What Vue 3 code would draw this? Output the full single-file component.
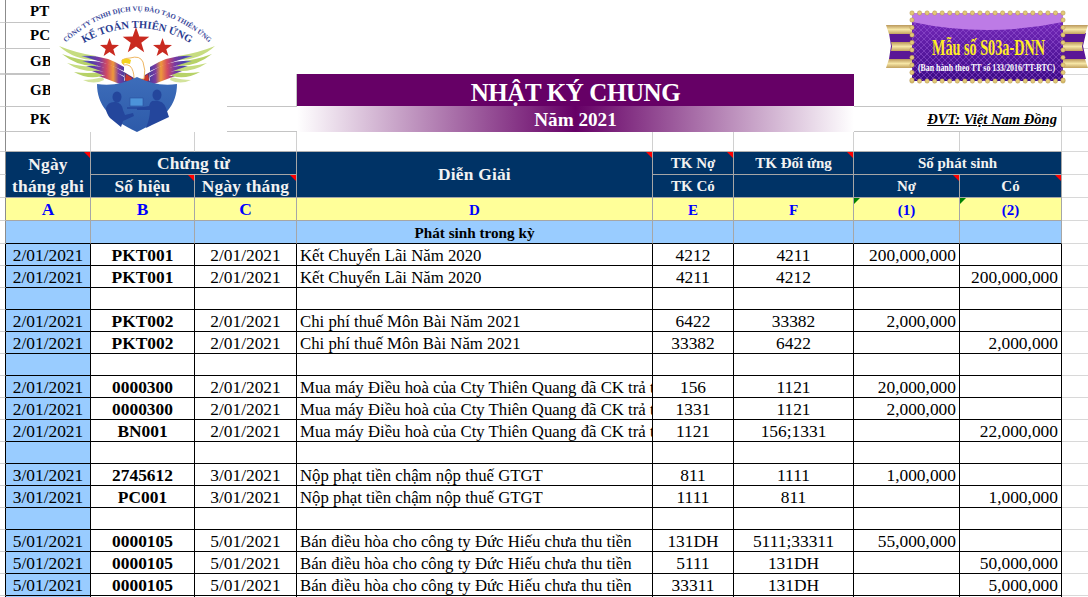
<template>
  <div class="sheet">
    <table class="grid">
      <colgroup>
        <col v-for="(w, i) in colWidths" :key="i" :style="{ width: w + 'px' }" />
      </colgroup>
      <tbody>
        <!-- top rows with the voucher codes -->
        <tr v-for="t in topRows" :key="t.code" :style="{ height: t.h + 'px' }">
          <td class="gutter"></td>
          <td class="code"><div class="code-clip">{{ t.code }}</div></td>
          <td colspan="7"></td>
          <td :class="{ side: t.code === 'PC' }"></td>
        </tr>
        <tr class="r-title">
          <td class="gutter"></td>
          <td class="code"><div class="code-clip">GBC</div></td>
          <td class="title-gap" colspan="2"></td>
          <td class="title-cell" colspan="3">NHẬT KÝ CHUNG</td>
          <td colspan="2"></td>
          <td class="side-t"></td>
        </tr>
        <tr class="r-year">
          <td class="gutter"></td>
          <td class="code code-last"><div class="code-clip">PKT</div></td>
          <td class="year-gap" colspan="2"></td>
          <td class="year-cell" colspan="3">Năm 2021</td>
          <td class="unit-cell" colspan="2"><span>ĐVT: Việt Nam Đồng</span></td>
          <td class="side side-t"></td>
        </tr>
        <tr class="r-blank">
          <td class="gutter"></td>
          <td v-for="n in 8" :key="n" class="soft"></td>
          <td class="side"></td>
        </tr>

        <!-- heading -->
        <tr class="r-head">
          <td class="gutter"></td>
          <td class="head big stack note" rowspan="2">Ngày<br />tháng ghi</td>
          <td class="head big" colspan="2">Chứng từ</td>
          <td class="head big tall note" rowspan="2">Diễn Giải</td>
          <td class="head note">TK Nợ</td>
          <td class="head note">TK Đối ứng</td>
          <td class="head" colspan="2">Số phát sinh</td>
          <td class="side"></td>
        </tr>
        <tr class="r-head">
          <td class="gutter"></td>
          <td class="head big note">Số hiệu</td>
          <td class="head big note">Ngày tháng</td>
          <td class="head">TK Có</td>
          <td class="head"></td>
          <td class="head note">Nợ</td>
          <td class="head note">Có</td>
          <td class="side"></td>
        </tr>
        <tr class="r-head">
          <td class="gutter"></td>
          <td v-for="c in letters" :key="c.t" class="letter" :class="[c.cls]">{{ c.t }}</td>
          <td class="side"></td>
        </tr>
        <tr class="r-head">
          <td class="gutter"></td>
          <td class="band"></td>
          <td class="band"></td>
          <td class="band"></td>
          <td class="band band-label">Phát sinh trong kỳ</td>
          <td class="band"></td>
          <td class="band"></td>
          <td class="band"></td>
          <td class="band"></td>
          <td class="side"></td>
        </tr>

        <!-- entries, empty row between vouchers -->
        <tr v-for="(r, i) in rows" :key="i" class="r-data">
          <td class="gutter"></td>
          <td class="date-col">{{ r[0] }}</td>
          <td class="ctr bold">{{ r[1] }}</td>
          <td class="ctr">{{ r[0] }}</td>
          <td class="desc"><div class="clip">{{ r[2] }}</div></td>
          <td class="ctr">{{ r[3] }}</td>
          <td class="ctr">{{ r[4] }}</td>
          <td class="num">{{ r[5] }}</td>
          <td class="num">{{ r[6] }}</td>
          <td class="side"></td>
        </tr>
      </tbody>
    </table>

    <!-- company logo, pasted over the cells -->
    <svg class="logo" viewBox="50 0 177 132" width="177" height="132">
      <defs>
        <path id="arcOuter" d="M62,46 Q137,-24 213,46" />
        <path id="arcInner" d="M84,43 Q137,13 190,43" />
        <linearGradient id="shieldFill" x1="0" y1="0" x2="0" y2="1">
          <stop offset="0" stop-color="#3d6dba" />
          <stop offset="1" stop-color="#2d5aa9" />
        </linearGradient>
        <linearGradient id="feather" gradientUnits="userSpaceOnUse" x1="80" y1="0" x2="126" y2="0">
          <stop offset="0" stop-color="#8f8fd6" />
          <stop offset="0.22" stop-color="#4a3fae" />
          <stop offset="0.42" stop-color="#7b3aa0" />
          <stop offset="0.58" stop-color="#d24a62" />
          <stop offset="0.72" stop-color="#ef9a3a" />
          <stop offset="0.84" stop-color="#7b3aa0" />
          <stop offset="1" stop-color="#3a3f9e" />
        </linearGradient>
        <g id="wing">
          <path d="M59,46 Q76,53 96,56 L96,60 Q74,60 59,46Z" fill="#c6dc80" />
          <path d="M62,54 Q78,60 97,62 L97,66 Q78,67 62,54Z" fill="#b7d268" />
          <path d="M67,63 Q82,67 99,67 L100,71 Q82,73 67,63Z" fill="#c6dc80" />
          <path d="M74,72 Q87,74 101,72 L102,76 Q88,80 74,72Z" fill="#b7d268" />
          <path d="M83,80 Q92,80 103,77 L104,80 Q94,85 83,80Z" fill="#d3e39c" />
          <g fill="url(#feather)">
            <path d="M81,56 Q104,54 124,67 L124,71 Q104,62 81,56Z" />
            <path d="M82,61 Q104,59 124,72 L124,76 Q104,67 82,61Z" />
            <path d="M86,66 Q106,64 124,77 L124,81 Q106,72 86,66Z" />
            <path d="M92,71 Q108,69 125,81 L125,84 Q108,77 92,71Z" />
            <path d="M99,76 Q112,74 125,84 L125,86 Q112,81 99,76Z" />
          </g>
          <path d="M124,72 L134,78 L134,84 L125,83 Z" fill="#54307f" />
          <path d="M126,74 L132,78 L130,83 L125,80 Z" fill="#c9372f" />
        </g>
      </defs>
      <rect x="50" y="0" width="177" height="132" fill="#fff" />
      <text class="logo-small"><textPath href="#arcOuter" startOffset="50%" text-anchor="middle">CÔNG TY TNHH DỊCH VỤ ĐÀO TẠO THIÊN ỨNG</textPath></text>
      <text class="logo-big"><textPath href="#arcInner" startOffset="50%" text-anchor="middle">KẾ TOÁN THIÊN ỨNG</textPath></text>
      <polygon v-for="s in stars" :key="s.x" :points="starPoints(s.x, s.y, s.r)" fill="#c92a20" />
      <use href="#wing" />
      <use href="#wing" transform="translate(274,0) scale(-1,1)" />
      <path d="M130,58 Q140,55 143,62 Q146,70 144,79 L134,79 Q134,70 130,66 Q127,64 124,65 Q121,63 122,60 Q125,58 130,58Z" fill="#fff" stroke="#e8a23a" stroke-width="0.8" />
      <path d="M122,60 Q127,57 131,60 L130,64 L125,63 Q123,65 122,63Z" fill="#f3d21e" />
      <path d="M97,84 Q118,87 137,77 Q156,87 177,84 C177,105 165,119 137,132 C109,119 97,105 97,84Z" fill="url(#shieldFill)" />
      <ellipse cx="117" cy="97" rx="4.5" ry="5.5" fill="#24469c" />
      <path d="M106,108 Q108,101 116,102 Q122,103 123,110 L125,115 L133,113 L134,116 L123,121 L121,127 L110,118 Q106,113 106,108Z" fill="#24469c" />
      <ellipse cx="157" cy="95" rx="4.5" ry="5.5" fill="#24469c" />
      <path d="M152,101 Q163,99 166,108 L169,117 L152,125 L146,128 Q150,118 150,110 L137,110 L137,108 L149,106 Q150,102 152,101Z" fill="#24469c" />
      <rect x="130" y="98" width="13" height="8" fill="#4c93d9" stroke="#2a4f9e" stroke-width="0.6" />
      <path d="M127,108 L146,108" stroke="#24469c" stroke-width="1.4" />
    </svg>

    <!-- "Mau so" ribbon -->
    <svg class="ribbon" viewBox="886 10 202 74" width="202" height="74">
      <defs>
        <linearGradient id="plaque" x1="0" y1="0" x2="0" y2="1">
          <stop offset="0" stop-color="#7c2cc0" />
          <stop offset="1" stop-color="#3c0a86" />
        </linearGradient>
        <linearGradient id="gold" x1="0" y1="0" x2="0" y2="1">
          <stop offset="0" stop-color="#b9975a" />
          <stop offset="0.5" stop-color="#f6e6a6" />
          <stop offset="1" stop-color="#c2a25f" />
        </linearGradient>
        <pattern id="lattice" width="6" height="6" patternUnits="userSpaceOnUse">
          <path d="M0,3 L3,0 L6,3 L3,6Z" fill="none" stroke="#9a5cd6" stroke-width="0.5" />
        </pattern>
      </defs>
      <path d="M889,33 H912 V59 H889 L891,46Z" fill="#5a1796" />
      <path d="M1063,33 H1086 L1083,46 L1086,59 H1063Z" fill="#5a1796" />
      <path v-for="d in goldTails" :key="d" :d="d" fill="url(#gold)" />
      <rect x="912" y="13" width="151" height="68" fill="url(#plaque)" />
      <rect x="912" y="13" width="151" height="68" fill="url(#lattice)" />
      <path d="M912,13 H1063 V22 Q987,38 912,22Z" fill="#bd7be6" />
      <circle v-for="d in dots" :key="d.k" :cx="d.x" :cy="d.y" r="2.2" fill="#e2c878" stroke="#a9883f" stroke-width="0.4" />
      <text class="rib-main" x="988.5" y="55" textLength="113" lengthAdjust="spacingAndGlyphs">Mẫu số S03a-DNN</text>
      <text class="rib-sub" x="986.5" y="70.5" textLength="137" lengthAdjust="spacingAndGlyphs">(Ban hành theo TT số 133/2016/TT-BTC)</text>
    </svg>
  </div>
</template>

<script setup>
const colWidths = [6, 85, 104, 102, 356, 81, 120, 106, 102, 26]

const topRows = [
  { code: 'PT', h: 23 },
  { code: 'PC', h: 26 },
  { code: 'GBN', h: 25 }
]

const letters = [
  { t: 'A', cls: 'l-big' },
  { t: 'B', cls: 'l-big' },
  { t: 'C', cls: 'l-big' },
  { t: 'D', cls: '' },
  { t: 'E', cls: '' },
  { t: 'F', cls: '' },
  { t: '(1)', cls: 'flag' },
  { t: '(2)', cls: 'flag' }
]

const ketChuyen = 'Kết Chuyển Lãi Năm 2020'
const monBai = 'Chi phí thuế Môn Bài Năm 2021'
const dieuHoa = 'Mua máy Điều hoà của Cty Thiên Quang đã CK trả tiền'
const nopPhat = 'Nộp phạt tiền chậm nộp thuế GTGT'
const banHang = 'Bán điều hòa cho công ty Đức Hiếu chưa thu tiền'
const empty = ['', '', '', '', '', '', '']

const rows = [
  ['2/01/2021', 'PKT001', ketChuyen, '4212', '4211', '200,000,000', ''],
  ['2/01/2021', 'PKT001', ketChuyen, '4211', '4212', '', '200,000,000'],
  empty,
  ['2/01/2021', 'PKT002', monBai, '6422', '33382', '2,000,000', ''],
  ['2/01/2021', 'PKT002', monBai, '33382', '6422', '', '2,000,000'],
  empty,
  ['2/01/2021', '0000300', dieuHoa, '156', '1121', '20,000,000', ''],
  ['2/01/2021', '0000300', dieuHoa, '1331', '1121', '2,000,000', ''],
  ['2/01/2021', 'BN001', dieuHoa, '1121', '156;1331', '', '22,000,000'],
  empty,
  ['3/01/2021', '2745612', nopPhat, '811', '1111', '1,000,000', ''],
  ['3/01/2021', 'PC001', nopPhat, '1111', '811', '', '1,000,000'],
  empty,
  ['5/01/2021', '0000105', banHang, '131DH', '5111;33311', '55,000,000', ''],
  ['5/01/2021', '0000105', banHang, '5111', '131DH', '', '50,000,000'],
  ['5/01/2021', '0000105', banHang, '33311', '131DH', '', '5,000,000'],
  empty
]

const stars = [
  { x: 136, y: 41, r: 14 },
  { x: 109.5, y: 48, r: 10 },
  { x: 162.5, y: 48, r: 10 }
]

function starPoints(cx, cy, r) {
  const pts = []
  for (let i = 0; i < 10; i++) {
    const rad = i % 2 ? r * 0.4 : r
    const a = (Math.PI / 5) * i - Math.PI / 2
    pts.push((cx + rad * Math.cos(a)).toFixed(1) + ',' + (cy + rad * Math.sin(a)).toFixed(1))
  }
  return pts.join(' ')
}

const goldTails = [
  'M886,25 H912 V34 H889Z',
  'M891,42 H912 V51 H891 L892,46.5Z',
  'M889,59 H912 V68 H886Z',
  'M1063,25 H1088 L1085,34 H1063Z',
  'M1063,42 H1083 L1082,46.5 L1083,51 H1063Z',
  'M1063,59 H1085 L1088,68 H1063Z'
]

// gold beads around the plaque
const dots = []
for (let x = 912; x <= 1063; x += 7.55) {
  dots.push({ k: 't' + x, x, y: 13 })
  dots.push({ k: 'b' + x, x, y: 81 })
}
for (let y = 20; y < 81; y += 7.5) {
  dots.push({ k: 'l' + y, x: 912, y })
  dots.push({ k: 'r' + y, x: 1063, y })
}
</script>

<style scoped>
.sheet {
  position: relative;
  width: 1088px;
  height: 597px;
  overflow: hidden;
  background: #fff;
  font-family: "Liberation Serif", "Times New Roman", serif;
  color: #000;
}

.grid {
  table-layout: fixed;
  width: 1088px;
  border-collapse: separate;
  border-spacing: 0;
}

.grid td {
  box-sizing: border-box;
  padding: 0;
  position: relative;
  white-space: nowrap;
  font-size: 17.4px;
  line-height: 1;
}

.r-title { height: 32px; }
.r-year { height: 26px; }
.r-blank { height: 20px; }
.r-head { height: 23px; }
.r-data { height: 22px; }

.gutter {
  border-right: 1px solid #8c8c8c;
  border-bottom: 1px solid #d0d0d0;
}

.r-data .gutter {
  border-right-color: #000;
}

.code {
  padding-left: 24px !important;
  font-weight: 700;
  font-size: 15px !important;
  border-bottom: 1px solid #c4c4c4;
}

/* the logo sits right after the code, so only the first letters show */
.code-clip {
  width: 20px;
  overflow: hidden;
}

.r-title .code {
  border-bottom: 0;
  border-top: 1px solid #c4c4c4;
}

.r-title .gutter {
  border-bottom: 0;
  border-top: 1px solid #d0d0d0;
}

.r-year .gutter {
  border-top: 1px solid #d0d0d0;
}

.code-last {
  border-top: 1px solid #c4c4c4;
}

.title-gap {
  border-right: 1px solid #c4c4c4;
}

.year-gap {
  border-top: 1px solid #c4c4c4;
  border-bottom: 1px solid #c4c4c4;
}

.side {
  border-bottom: 1px solid #d8d8d8;
}

.side-t {
  border-top: 1px solid #d8d8d8;
}

.soft {
  border-right: 1px solid #d0d0d0;
  border-bottom: 1px solid #b0b0b0;
}

.title-cell {
  background: #660066;
  color: #fff;
  text-align: center;
  font-size: 25px !important;
  letter-spacing: -0.4px;
  font-weight: 700;
  padding-top: 5px !important;
}

.year-cell {
  background: linear-gradient(90deg, #fff, #660066 50%, #fff);
  color: #fff;
  text-align: center;
  font-size: 19.2px !important;
  font-weight: 700;
  padding-top: 1px !important;
}

.unit-cell {
  text-align: right;
  padding-right: 4px !important;
  border-right: 1px solid #c4c4c4;
  border-top: 1px solid #c4c4c4;
  border-bottom: 1px solid #c4c4c4;
  font-size: 14.6px !important;
  font-weight: 700;
  font-style: italic;
}

.unit-cell span {
  text-decoration: underline;
}

.head {
  background: #003366;
  color: #f2f2f2;
  text-align: center;
  font-size: 15px !important;
  font-weight: 700;
  border-right: 1px solid #a6a6a6;
  border-bottom: 1px solid #a6a6a6;
  padding-top: 1px !important;
}

.head.big {
  font-size: 17.4px !important;
  letter-spacing: 0.2px;
  padding-top: 2px !important;
}

.head.tall {
  padding-top: 0 !important;
}

.head.stack {
  line-height: 22px !important;
  padding-top: 1px !important;
}

/* comment marker in the cell corner */
.note::after,
.flag::after {
  content: "";
  position: absolute;
  top: 0;
  width: 0;
  height: 0;
  border-style: solid;
}

.note::after {
  right: 0;
  border-width: 0 6px 6px 0;
  border-color: transparent #ff0000 transparent transparent;
}

.flag::after {
  left: 0;
  border-width: 6px 6px 0 0;
  border-color: #008000 transparent transparent transparent;
}

.letter {
  background: #ffff99;
  color: #0000ff;
  text-align: center;
  font-size: 15px !important;
  font-weight: 700;
  border-right: 1px solid #a6a6a6;
  border-bottom: 1px solid #a6a6a6;
  padding-top: 2px !important;
}

.letter.l-big {
  font-size: 17.4px !important;
}

.band {
  background: #99ccff;
  border-right: 1px solid #a6a6a6;
  border-bottom: 1px solid #000;
}

.band-label {
  text-align: center;
  font-size: 15.2px !important;
  font-weight: 700;
  padding-top: 2px !important;
}

.r-data td {
  line-height: 18px !important;
}

.r-data td:not(.gutter):not(.side) {
  border-right: 1px solid #000;
  border-bottom: 1px solid #000;
}

.date-col {
  background: #99ccff;
  text-align: center;
}

.ctr {
  text-align: center;
}

.bold {
  font-weight: 700;
}

.desc {
  padding-left: 3px !important;
  padding-top: 2px !important;
  font-size: 16.75px !important;
}

.clip {
  overflow: hidden;
}

.num {
  text-align: right;
  padding-right: 3px !important;
}

.logo {
  position: absolute;
  left: 50px;
  top: 0;
}

.logo-small {
  font-size: 6.9px;
  font-weight: 700;
  fill: #39479a;
}

.logo-big {
  font-size: 10.6px;
  font-weight: 700;
  fill: #2a3c90;
}

.ribbon {
  position: absolute;
  left: 886px;
  top: 10px;
}

.rib-main {
  font-size: 23px;
  font-weight: 700;
  fill: #ffee22;
  text-anchor: middle;
}

.rib-sub {
  font-size: 9.5px;
  font-weight: 700;
  fill: #fff;
  text-anchor: middle;
}
</style>

<style>
html,
body {
  margin: 0;
  overflow: hidden;
}
</style>
